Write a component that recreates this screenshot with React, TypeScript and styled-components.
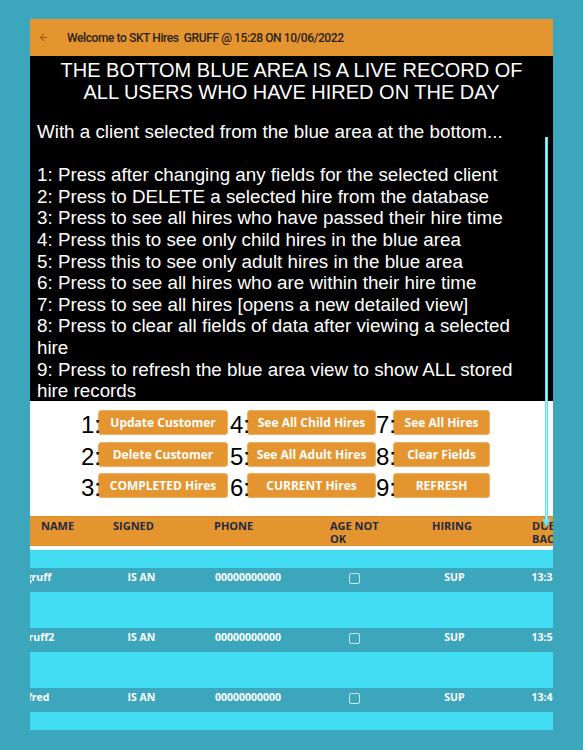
import React from "react";
import styled, { createGlobalStyle } from "styled-components";

const Global = createGlobalStyle`
  html, body { margin: 0; padding: 0; background: #3ca6bd; }
  body { font-family: "Liberation Sans", Arial, sans-serif; }
`;

const Page = styled.div`
  padding: 19px 0 0 30px;
  height: 731px;
  box-sizing: border-box;
`;

const Panel = styled.div`
  position: relative;
  width: 523px;
  height: 711px;
  overflow: hidden;
  display: flex;
  flex-direction: column;
`;

const TopBar = styled.div`
  height: 37px;
  flex: none;
  background: #e5952f;
  display: flex;
  align-items: center;
  padding-left: 8px;
`;

const BackIcon = styled.svg`
  width: 11px;
  height: 11px;
  fill: #8f5c1f;
  margin-right: 18px;
`;

const Title = styled.div`
  font-family: Roboto, "Noto Sans", sans-serif;
  font-weight: 500;
  font-size: 12px;
  letter-spacing: -0.4px;
  color: #2a2214;
  white-space: pre;
`;

const Info = styled.div`
  background: #000;
  color: #fff;
  flex: none;
  padding: 3px 0 0 0;
  height: 345px;
  box-sizing: border-box;
  overflow: hidden;
  font-family: "Liberation Sans", Arial, sans-serif;
`;

const Headline = styled.div`
  text-align: center;
  font-size: 20px;
  line-height: 22px;
  margin-bottom: 18px;
`;

const Body = styled.div`
  font-size: 18.8px;
  line-height: 21.6px;
  padding-left: 7px;
  width: 505px;
`;

const Blank = styled.div`
  height: 21.6px;
`;

const ButtonArea = styled.div`
  background: #fff;
  flex: none;
  padding: 9px 0 18px 51px;
  display: grid;
  grid-template-columns: 149px 146px auto;
  row-gap: 6.5px;
`;

const Group = styled.div`
  display: flex;
  align-items: center;
  height: 25px;
`;

const Num = styled.span`
  position: relative;
  z-index: 1;
  font-family: "Liberation Sans", Arial, sans-serif;
  font-size: 24px;
  line-height: 25px;
  margin-top: 4px;
  color: #000;
  margin-right: -3px;
`;

const Btn = styled.button<{ $w: number }>`
  width: ${(p) => p.$w}px;
  height: 25px;
  padding: 0;
  background: #e5952f;
  border: 1px solid #eeb064;
  border-radius: 3px;
  color: #fff;
  font-family: "Open Sans", "Noto Sans", sans-serif;
  font-weight: 700;
  font-size: 12px;
  white-space: nowrap;
`;

const HeadRow = styled.div`
  flex: none;
  background: #e5952f;
  border-top: 1px solid #d88b28;
  border-bottom: 1px solid #d88b28;
  height: 26px;
  padding: 2px 0 0 11px;
  display: grid;
  grid-template-columns: 72px 101px 116px 102px 100px 60px;
  font-family: "Open Sans", "Noto Sans", sans-serif;
  font-weight: 700;
  font-size: 11px;
  line-height: 13px;
  color: #1f2a3d;
  white-space: nowrap;
`;

const Gap = styled.div`
  flex: none;
  height: 4px;
  background: #fff;
`;

const Item = styled.div`
  flex: none;
  background: #42dcf2;
  padding: 18px 0;
`;

const DataRow = styled.div`
  background: #3ca6bd;
  height: 24px;
  box-sizing: border-box;
  padding-top: 2px;
  margin-left: -42px;
  display: grid;
  grid-template-columns: 101px 105px 108px 105px 95px 86px;
  justify-items: center;
  align-items: start;
  font-family: "Open Sans", "Noto Sans", sans-serif;
  font-weight: 700;
  font-size: 10.5px;
  color: #fff;
  white-space: nowrap;
`;

const Check = styled.span`
  display: block;
  width: 11px;
  height: 11px;
  box-sizing: border-box;
  margin-top: 3px;
  border: 1.5px solid rgba(255, 255, 255, 0.75);
  border-radius: 2px;
`;

const ScrollMark = styled.svg`
  position: absolute;
  left: 512px;
  top: 118px;
  width: 9px;
  height: 392px;
`;

const buttons: [string, string, number][] = [
  ["1", "Update Customer", 130],
  ["4", "See All Child Hires", 131],
  ["7", "See All Hires", 97],
  ["2", "Delete Customer", 130],
  ["5", "See All Adult Hires", 131],
  ["8", "Clear Fields", 97],
  ["3", "COMPLETED Hires", 130],
  ["6", "CURRENT Hires", 131],
  ["9", "REFRESH", 97],
];

const rows = [
  { name: "gruff", signed: "IS AN", phone: "00000000000", hiring: "SUP", due: "13:38" },
  { name: "gruff2", signed: "IS AN", phone: "00000000000", hiring: "SUP", due: "13:50" },
  { name: "fred", signed: "IS AN", phone: "00000000000", hiring: "SUP", due: "13:40" },
];

export default function App() {
  return (
    <Page>
      <Global />
      <Panel>
        <TopBar>
          <BackIcon viewBox="0 0 24 24">
            <path d="M20 11H7.83l5.59-5.59L12 4l-8 8 8 8 1.41-1.41L7.83 13H20v-2z" />
          </BackIcon>
          <Title>{"Welcome to SKT Hires  GRUFF @ 15:28 ON 10/06/2022"}</Title>
        </TopBar>
        <Info>
          <Headline>
            THE BOTTOM BLUE AREA IS A LIVE RECORD OF
            <br />
            ALL USERS WHO HAVE HIRED ON THE DAY
          </Headline>
          <Body>
            <div>With a client selected from the blue area at the bottom...</div>
            <Blank />
            <div>1: Press after changing any fields for the selected client</div>
            <div>2: Press to DELETE a selected hire from the database</div>
            <div>3: Press to see all hires who have passed their hire time</div>
            <div>4: Press this to see only child hires in the blue area</div>
            <div>5: Press this to see only adult hires in the blue area</div>
            <div>6: Press to see all hires who are within their hire time</div>
            <div>7: Press to see all hires [opens a new detailed view]</div>
            <div>8: Press to clear all fields of data after viewing a selected hire</div>
            <div>9: Press to refresh the blue area view to show ALL stored hire records</div>
          </Body>
        </Info>
        <ButtonArea>
          {buttons.map(([n, label, w]) => (
            <Group key={n}>
              <Num>{n}:</Num>
              <Btn $w={w}>{label}</Btn>
            </Group>
          ))}
        </ButtonArea>
        <HeadRow>
          <div>NAME</div>
          <div>SIGNED</div>
          <div>PHONE</div>
          <div>
            AGE NOT
            <br />
            OK
          </div>
          <div>HIRING</div>
          <div>
            DUE
            <br />
            BACK
          </div>
        </HeadRow>
        <Gap />
        {rows.map((r) => (
          <Item key={r.name}>
            <DataRow>
              <span>{r.name}</span>
              <span>{r.signed}</span>
              <span>{r.phone}</span>
              <Check />
              <span>{r.hiring}</span>
              <span>{r.due}</span>
            </DataRow>
          </Item>
        ))}
        <ScrollMark viewBox="0 0 9 392">
          <rect x="3" y="0" width="3" height="386" fill="#5fdff3" />
          <rect x="4" y="0" width="1" height="386" fill="#b8f3fb" />
          <path d="M0.5 382 L4.5 391 L8.5 382 L6 382 L4.5 386 L3 382 Z" fill="#5fdff3" />
        </ScrollMark>
      </Panel>
    </Page>
  );
}
